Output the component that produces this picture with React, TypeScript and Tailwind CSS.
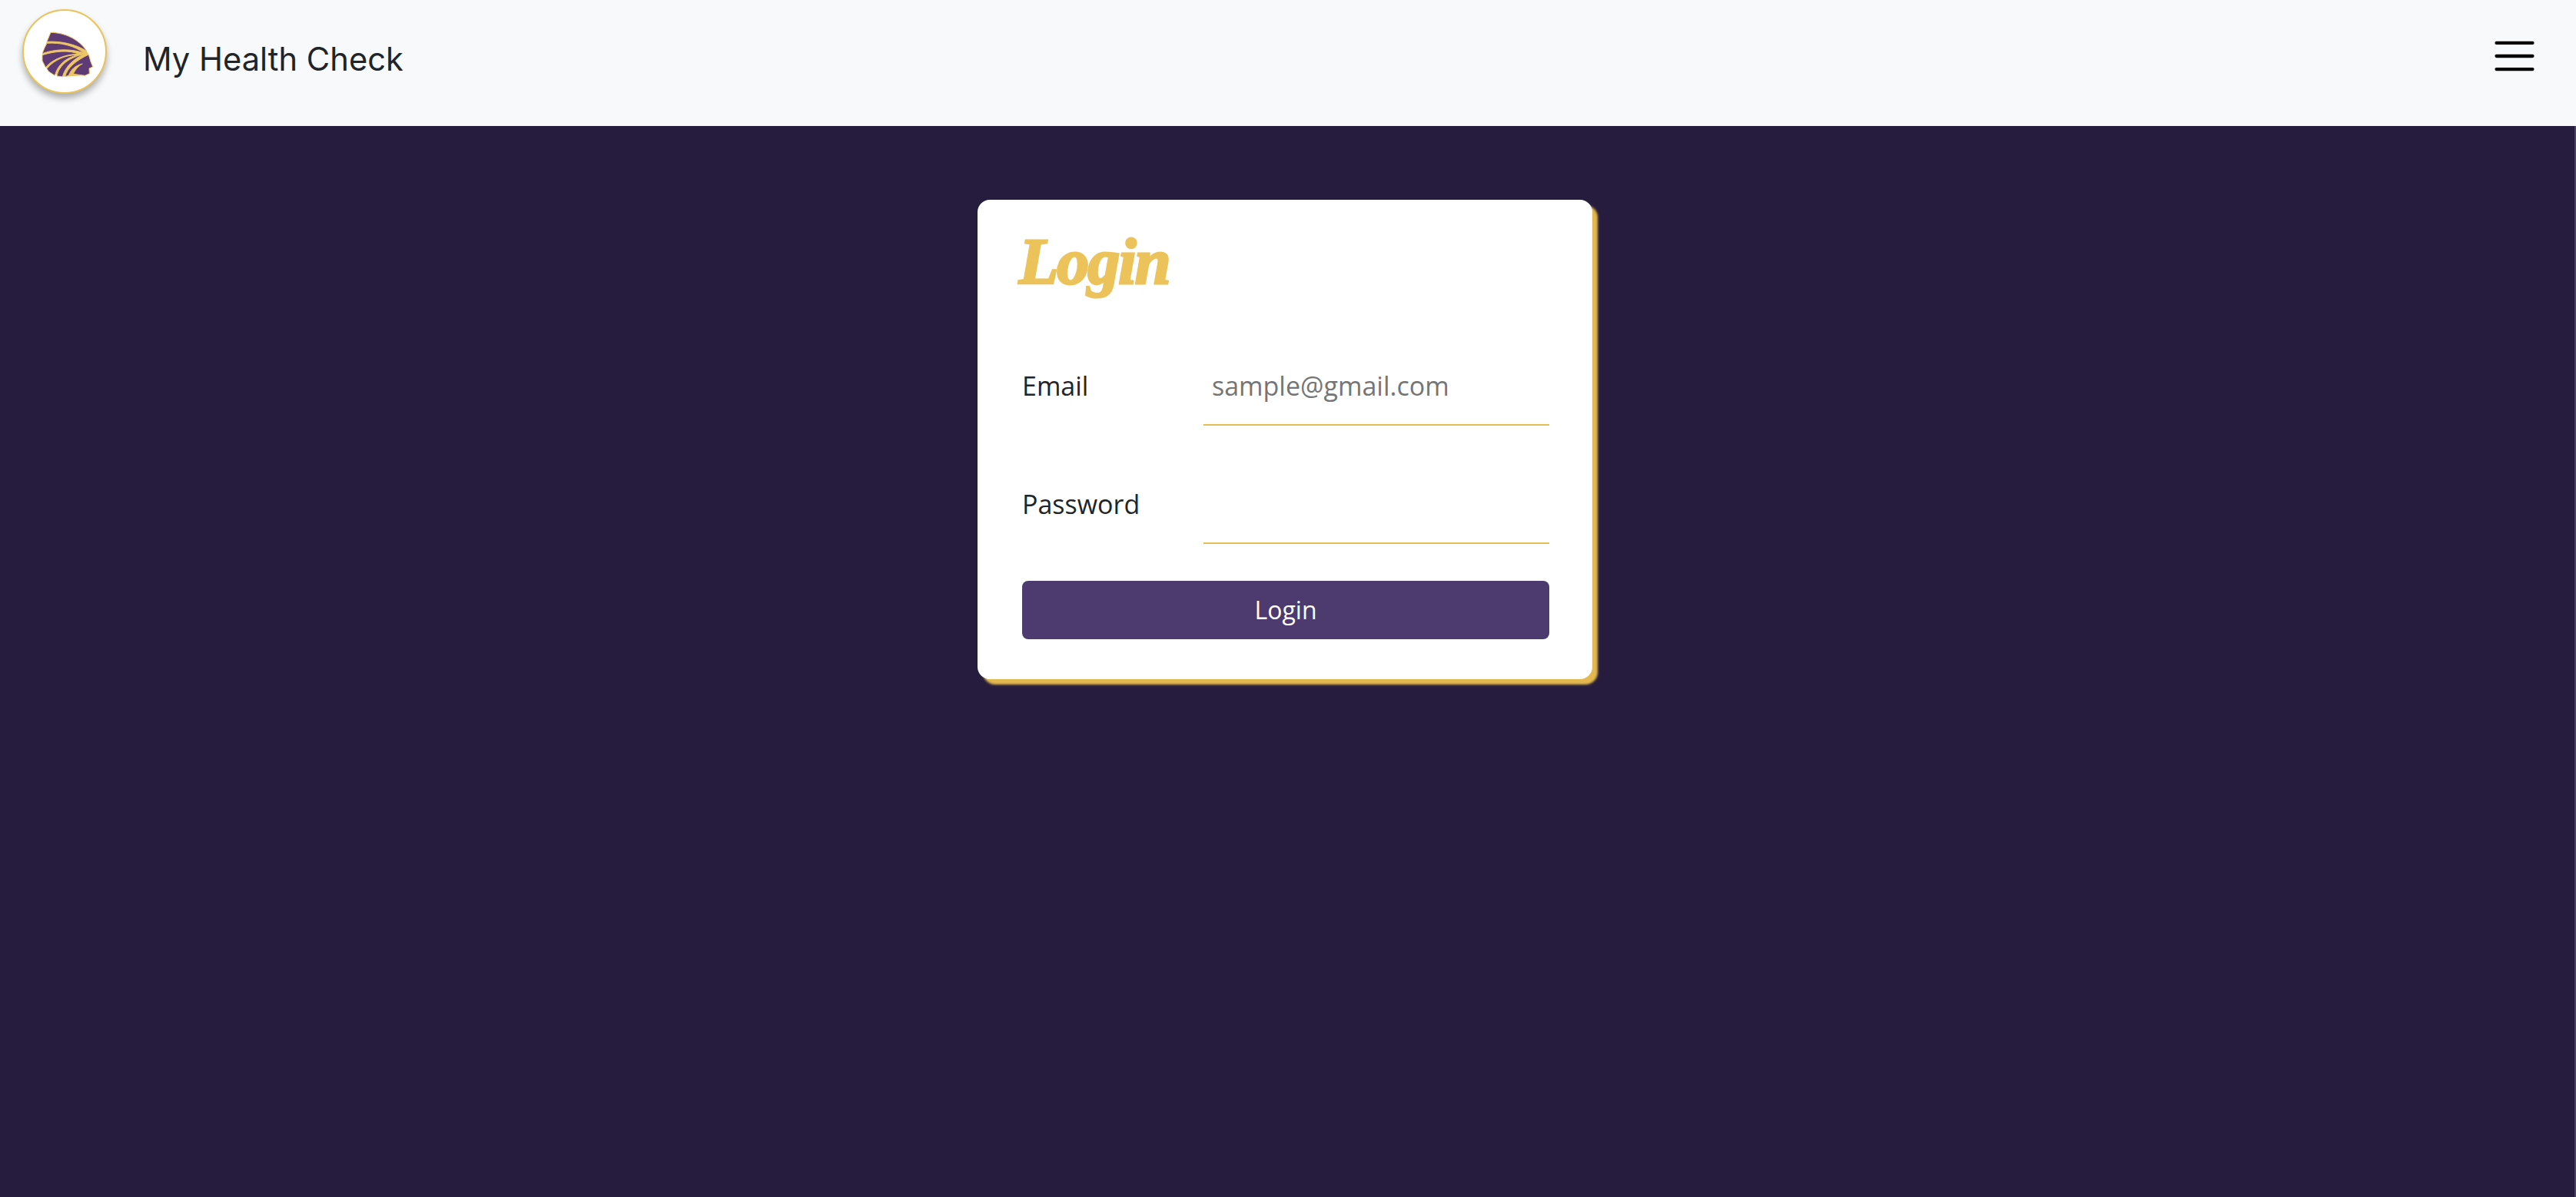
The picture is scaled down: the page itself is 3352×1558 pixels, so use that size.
const Logo = () => {
  return (
    <div className="w-[110px] h-[110px] rounded-full bg-white border-2 border-[#ebc35a] shadow-[0_6px_8px_rgba(0,0,0,0.3)] relative shrink-0">
      <svg
        viewBox="0 0 210 210"
        className="absolute left-[21px] top-[23px] w-[70px] h-[70px] blur-[0.6px]"
      >
        <path
          d="M42 16C95 16 152 42 182 88L190 102L198 130L206 150L192 156L193 176L176 184L88 188L34 168L9 126L9 98L18 76L27 52Z"
          fill="#ecc666"
        />
        <g fill="#5f3b75" stroke="#ecc666" strokeWidth="3" strokeLinejoin="round">
          <path d="M42 16C95 16 152 42 182 88C140 62 80 48 27 52Z" />
          <path d="M27 58C80 54 135 68 172 96C125 80 65 78 9 98L18 76Z" />
          <path d="M9 104C60 88 115 84 152 100C105 100 50 118 22 152L9 126Z" />
          <path d="M27 157C55 122 105 102 146 104C105 114 70 138 58 184L34 168Z" />
          <path d="M66 186C75 142 115 114 172 100C130 120 100 148 88 188Z" />
          <path d="M98 188C108 152 140 126 190 102L198 130L206 150L192 156L193 176L176 184L130 178C140 158 150 146 166 138C135 146 120 162 112 184Z" />
        </g>
      </svg>
    </div>
  );
};

const Field = ({ label, placeholder, type }: { label: string; placeholder?: string; type: string }) => {
  return (
    <div className="flex items-start">
      <label className="w-[236px] text-[34px] leading-[48px] text-[#212529]">{label}</label>
      <input
        type={type}
        placeholder={placeholder}
        className="flex-1 min-w-0 h-[76px] pb-[26px] px-[11px] text-[34px] text-[#212529] placeholder:text-[#757575] border-b-2 border-[#e6bc55] outline-none bg-white"
      />
    </div>
  );
};

export default function App() {
  return (
    <div className="min-h-screen flex flex-col bg-[#261c3d] font-['Open_Sans',sans-serif]">
      {/* Header */}
      <header className="h-[164px] shrink-0 bg-[#f8f9fa] flex items-start justify-between">
        <div className="flex items-start pl-[29px] pt-[12px]">
          <Logo />
          <span className="ml-[47px] mt-[35px] text-[41.7px] leading-[60px] text-[#212529] font-['Inter',sans-serif]">
            My Health Check
          </span>
        </div>
        <button aria-label="Menu" className="mr-[48px] mt-[41px]">
          <svg viewBox="0 0 30 30" className="w-[64px] h-[64px]">
            <path d="M4 7h22M4 15h22M4 23h22" stroke="#000" strokeWidth="2" strokeLinecap="round" />
          </svg>
        </button>
      </header>

      {/* Main */}
      <main className="flex-1 flex justify-center items-start pt-[96px] pr-[6px] border-r-2 border-[#4a4160]">
        <div className="w-[800px] h-[624px] bg-white rounded-[16px] shadow-[7px_7px_3px_#e3b94f] pl-[58px] pr-[56px] flex flex-col">
          <h1 className="h-[218px] -ml-[4px] pt-[26px] text-[#ebc35a] text-[84px] leading-[110px] tracking-[-2px] font-bold italic font-['Liberation_Serif',serif] [-webkit-text-stroke:3px_#ebc35a]">
            Login
          </h1>
          <div className="flex flex-col gap-[78px]">
            <Field label="Email" type="email" placeholder="sample@gmail.com" />
            <Field label="Password" type="password" />
          </div>
          <button className="mt-[48px] h-[76px] rounded-[8px] bg-[#4d3a6e] text-white text-[32px] text-center">
            Login
          </button>
        </div>
      </main>
    </div>
  );
}
